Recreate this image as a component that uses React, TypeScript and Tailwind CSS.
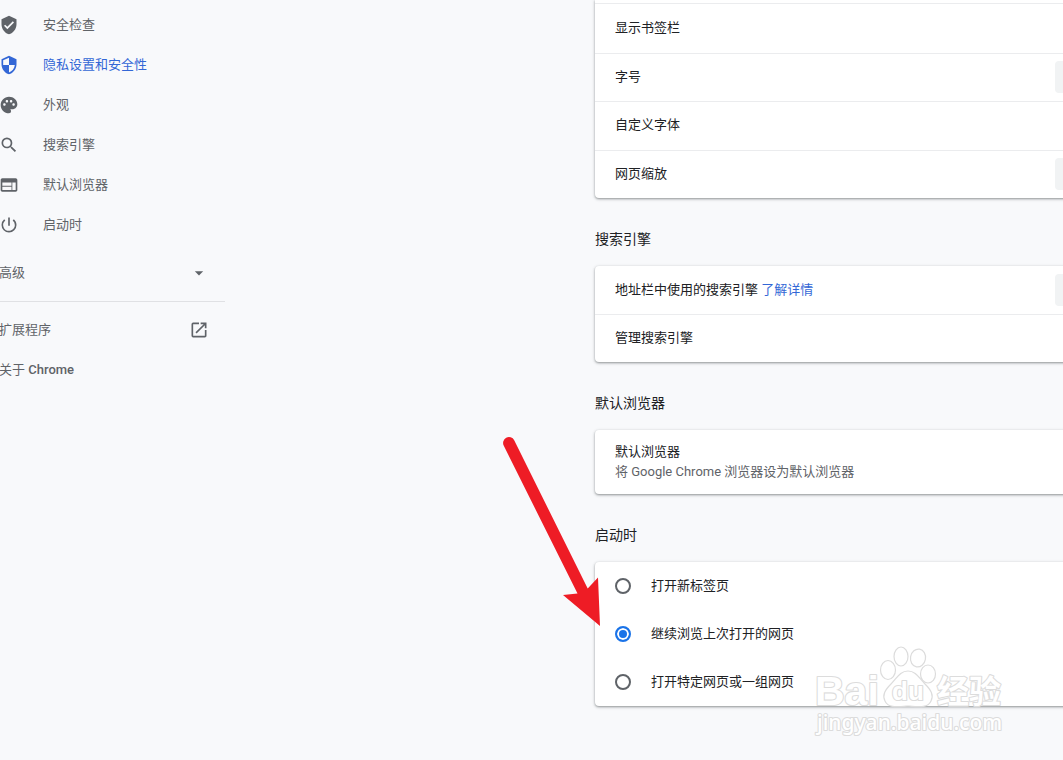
import type { ReactNode } from 'react';
import type { IconType } from 'react-icons';
import {
  MdArrowDropDown,
  MdOpenInNew,
  MdPalette,
  MdPowerSettingsNew,
  MdSearch,
  MdSecurity,
  MdVerifiedUser,
  MdWeb,
} from 'react-icons/md';

const navItems: { label: string; icon: IconType; active?: boolean }[] = [
  { label: '安全检查', icon: MdVerifiedUser },
  { label: '隐私设置和安全性', icon: MdSecurity, active: true },
  { label: '外观', icon: MdPalette },
  { label: '搜索引擎', icon: MdSearch },
  { label: '默认浏览器', icon: MdWeb },
  { label: '启动时', icon: MdPowerSettingsNew },
];

const startupOptions = ['打开新标签页', '继续浏览上次打开的网页', '打开特定网页或一组网页'];

function Sidebar() {
  return (
    <nav aria-label="设置" className="-ml-px w-[226px] shrink-0 pt-[5px] text-[#5f6368]">
      <ul>
        {navItems.map(({ label, icon: Icon, active }) => (
          <li key={label}>
            <a
              href="#"
              aria-current={active ? 'page' : undefined}
              className={`flex h-10 items-center gap-6 ${active ? 'text-[#3367d6]' : ''}`}
            >
              <Icon className="size-5" />
              <span className="pb-px">{label}</span>
            </a>
          </li>
        ))}
      </ul>
      <button type="button" className="mt-2 flex h-10 w-full items-center justify-between pr-4">
        <span className="pb-px">高级</span>
        <MdArrowDropDown className="size-5" />
      </button>
      <hr className="mt-2 mb-2 border-[#e0e1e4]" />
      <a href="#" className="flex h-10 items-center justify-between pr-4">
        <span className="pb-px">扩展程序</span>
        <MdOpenInNew className="size-5" />
      </a>
      <a href="#" className="flex h-10 items-center">
        <span className="pb-px">
          关于 <span className="font-medium">Chrome</span>
        </span>
      </a>
    </nav>
  );
}

function Card({ children, className = '' }: { children: ReactNode; className?: string }) {
  return (
    <div
      className={`-mr-2 rounded-l bg-white shadow-[0_1px_2px_0_rgba(60,64,67,0.4),0_1px_3px_1px_rgba(60,64,67,0.15)] ${className}`}
    >
      {children}
    </div>
  );
}

function Row({ children, control }: { children: ReactNode; control?: string }) {
  return (
    <div className="flex min-h-12 items-center justify-between border-t border-[#ebecee] pr-2 pl-5 first:border-t-0">
      <span className="pb-px">{children}</span>
      {control && (
        <button type="button" aria-label={control} className="h-8 w-2 rounded-l bg-[#f1f3f4]" />
      )}
    </div>
  );
}

function Heading({ children }: { children: ReactNode }) {
  return <h2 className="pt-[31px] pb-[17px] text-sm leading-5">{children}</h2>;
}

function Arrow() {
  return (
    <svg
      aria-hidden="true"
      viewBox="0 0 110 200"
      className="pointer-events-none absolute top-[430px] left-[500px] h-[200px] w-[110px] fill-[#ee1c25]"
    >
      <path d="M3.8 15.8A5.9 5.9 0 0 1 14.2 10.2L87.7 158.6 98 147.5 100 196 63 165 77.5 163.6Z" />
    </svg>
  );
}

function Watermark() {
  return (
    <svg
      role="img"
      aria-label="Baidu 经验"
      viewBox="0 0 210 96"
      className="pointer-events-none absolute top-[644px] left-[810px] h-24 w-[210px]"
    >
      <g fill="#ffffff" stroke="#dcdcdc" strokeLinejoin="round">
        <g strokeWidth="1.2">
          <ellipse cx="78" cy="26" rx="7.5" ry="9.5" />
          <ellipse cx="91" cy="12.5" rx="7" ry="9.5" />
          <ellipse cx="108" cy="14" rx="7.5" ry="9" transform="rotate(10 108 14)" />
          <ellipse cx="118" cy="30" rx="7.5" ry="9" />
          <path d="M98 27C106 27 109 34 115 40C121 46 124 51 121 57C118 64 110 63 98 62C86 63 78 64 75 57C72 51 75 46 81 40C87 34 90 27 98 27Z" />
        </g>
        <g paintOrder="stroke" strokeWidth="2.2" fontWeight="700">
          <text x="5" y="61" fontSize="41" fontFamily="Liberation Sans, sans-serif">
            Bai
          </text>
          <text x="82" y="56" fontSize="26" fontFamily="Liberation Sans, sans-serif">
            du
          </text>
          <text x="127" y="59" fontSize="32" fontFamily="Noto Sans CJK SC, sans-serif">
            经验
          </text>
          <text
            x="7"
            y="86"
            fontSize="21"
            fontWeight="500"
            fontFamily="Noto Sans, sans-serif"
          >
            jingyan.baidu.com
          </text>
        </g>
      </g>
    </svg>
  );
}

export default function App() {
  return (
    <div className="relative flex min-h-screen overflow-hidden bg-[#f8f9fb] font-['Roboto','Noto_Sans_CJK_SC',sans-serif] text-[13px] leading-5 text-[#202124]">
      <Sidebar />
      <main className="min-w-0 flex-1 pb-12 pl-[370px]">
        <Card className="rounded-tl-none pt-[3px]">
          <div className="grid min-h-[195px] auto-rows-fr border-t border-[#ebecee]">
            <Row>显示书签栏</Row>
            <Row control="字号">字号</Row>
            <Row>自定义字体</Row>
            <Row control="网页缩放">网页缩放</Row>
          </div>
        </Card>

        <Heading>搜索引擎</Heading>
        <Card>
          <Row control="搜索引擎">
            地址栏中使用的搜索引擎{' '}
            <a href="#" className="text-[#3367d6]">
              了解详情
            </a>
          </Row>
          <Row>管理搜索引擎</Row>
        </Card>

        <Heading>默认浏览器</Heading>
        <Card className="py-3 pl-5">
          <p>默认浏览器</p>
          <p className="text-[#5f6368]">将 Google Chrome 浏览器设为默认浏览器</p>
        </Card>

        <Heading>启动时</Heading>
        <Card>
          {startupOptions.map((option, index) => (
            <label key={option} className="flex h-12 items-center gap-5 px-5">
              <input
                type="radio"
                name="startup"
                defaultChecked={index === 1}
                className="size-4 appearance-none rounded-full border-2 border-[#5f6368] checked:border-[#1a73e8] checked:bg-[#1a73e8] checked:shadow-[inset_0_0_0_2px_#ffffff]"
              />
              <span className="pb-px">{option}</span>
            </label>
          ))}
        </Card>
      </main>
      <Arrow />
      <Watermark />
    </div>
  );
}
